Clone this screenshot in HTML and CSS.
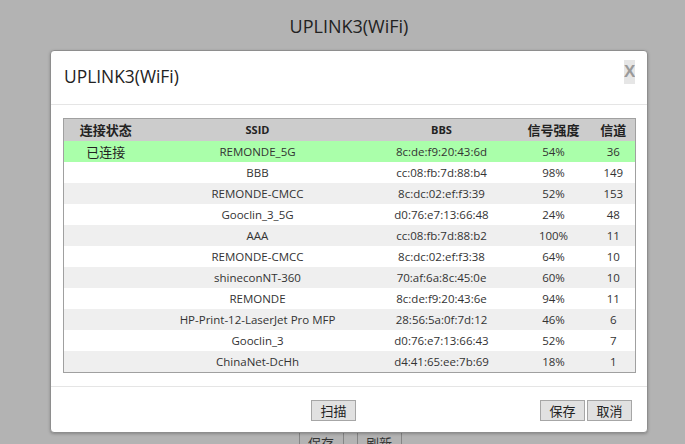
FILE: index.html
```html
<!DOCTYPE html>
<html lang="zh">
<head>
<meta charset="utf-8">
<title>UPLINK3(WiFi)</title>
<link rel="stylesheet" href="styles.css">
</head>
<body>
<div class="page">
  <h1 class="page-title">UPLINK3(WiFi)</h1>
  <div class="page-body"></div>
  <div class="page-actions">
    <button class="btn btn-dim">保存</button>
    <button class="btn btn-dim">刷新</button>
  </div>
</div>

<div class="modal">
  <div class="modal-header">
    <span class="modal-title">UPLINK3(WiFi)</span>
    <span class="modal-close">X</span>
  </div>
  <div class="modal-body">
    <table class="wifi-table">
      <colgroup>
        <col class="c1"><col class="c2"><col class="c3"><col class="c4"><col class="c5">
      </colgroup>
      <thead>
        <tr><th class="zh">连接状态</th><th>SSID</th><th>BBS</th><th class="zh">信号强度</th><th class="zh">信道</th></tr>
      </thead>
      <tbody>
        <tr class="connected"><td class="zh">已连接</td><td>REMONDE_5G</td><td>8c:de:f9:20:43:6d</td><td>54%</td><td>36</td></tr>
        <tr><td></td><td>BBB</td><td>cc:08:fb:7d:88:b4</td><td>98%</td><td>149</td></tr>
        <tr><td></td><td>REMONDE-CMCC</td><td>8c:dc:02:ef:f3:39</td><td>52%</td><td>153</td></tr>
        <tr><td></td><td>Gooclin_3_5G</td><td>d0:76:e7:13:66:48</td><td>24%</td><td>48</td></tr>
        <tr><td></td><td>AAA</td><td>cc:08:fb:7d:88:b2</td><td>100%</td><td>11</td></tr>
        <tr><td></td><td>REMONDE-CMCC</td><td>8c:dc:02:ef:f3:38</td><td>64%</td><td>10</td></tr>
        <tr><td></td><td>shineconNT-360</td><td>70:af:6a:8c:45:0e</td><td>60%</td><td>10</td></tr>
        <tr><td></td><td>REMONDE</td><td>8c:de:f9:20:43:6e</td><td>94%</td><td>11</td></tr>
        <tr><td></td><td>HP-Print-12-LaserJet Pro MFP</td><td>28:56:5a:0f:7d:12</td><td>46%</td><td>6</td></tr>
        <tr><td></td><td>Gooclin_3</td><td>d0:76:e7:13:66:43</td><td>52%</td><td>7</td></tr>
        <tr><td></td><td>ChinaNet-DcHh</td><td>d4:41:65:ee:7b:69</td><td>18%</td><td>1</td></tr>
      </tbody>
    </table>
  </div>
  <div class="modal-footer">
    <div class="footer-center">
      <button class="btn">扫描</button>
    </div>
    <div class="footer-right">
      <button class="btn">保存</button>
      <button class="btn">取消</button>
    </div>
  </div>
</div>
</body>
</html>
```

FILE: styles.css
```css
html, body {
  margin: 0;
  padding: 0;
}
body {
  background: #b3b3b3;
  font-family: "Open Sans", "Noto Sans CJK SC", sans-serif;
  color: #333;
  width: 685px;
  height: 444px;
  overflow: hidden;
  position: relative;
}
.page {
  width: 598px;
  margin-left: 50px;
}
.page-title {
  margin: 0;
  padding-top: 13px;
  font-size: 18px;
  font-weight: 400;
  line-height: 26px;
  text-align: center;
  color: #222;
}
.page-body {
  height: 393px;
}
.page-actions {
  display: flex;
  justify-content: center;
  gap: 13px;
  padding-left: 2px;
}
.btn {
  font-family: "Noto Sans CJK SC", "Open Sans", sans-serif;
  font-size: 13px;
  line-height: 18px;
  height: 21px;
  width: 45px;
  padding: 0;
  background: #e1e1e1;
  border: 1px solid #a6a6a6;
  border-radius: 0;
  color: #222;
}
.btn-dim {
  background: #b3b3b3;
  border-color: #858585;
  color: #333;
}

.modal {
  position: absolute;
  left: 50px;
  top: 50px;
  width: 596px;
  height: 381px;
  background: #fff;
  border: 1px solid #8e8e8e;
  border-radius: 4px;
  box-shadow: 0 1px 3px rgba(0,0,0,0.25);
  display: flex;
  flex-direction: column;
}
.modal-header {
  height: 53px;
  border-bottom: 1px solid #e5e5e5;
  display: flex;
  align-items: flex-start;
  justify-content: space-between;
  padding: 0 12px 0 13px;
}
.modal-title {
  font-size: 17.4px;
  line-height: 26px;
  margin-top: 12px;
  color: #222;
}
.modal-close {
  margin-top: 9px;
  width: 11px;
  height: 24px;
  background: #e6e6e6;
  color: #9a9a9a;
  font-family: "Liberation Sans", sans-serif;
  font-weight: 700;
  font-size: 17px;
  line-height: 24px;
  text-align: center;
  overflow: hidden;
}
.modal-body {
  padding: 13px 12px 13px 12px;
  border-bottom: 1px solid #e5e5e5;
}
.wifi-table {
  width: 572px;
  border-collapse: collapse;
  table-layout: fixed;
  border: 1px solid #a0a0a0;
  font-size: 11.5px;
}
.c1 { width: 84px; }
.c2 { width: 220px; }
.c3 { width: 148px; }
.c4 { width: 76px; }
.c5 { width: 44px; }
.wifi-table th {
  background: #cccccc;
  height: 22px;
  padding: 0;
  font-weight: 700;
  font-size: 11px;
  color: #222;
  text-align: center;
  line-height: 22px;
}
.wifi-table th.zh {
  font-size: 13px;
  font-family: "Noto Sans CJK SC", sans-serif;
}
.wifi-table td {
  height: 21px;
  padding: 0;
  text-align: center;
  line-height: 21px;
  white-space: nowrap;
}
.wifi-table td.zh {
  font-size: 13px;
  font-family: "Noto Sans CJK SC", sans-serif;
  color: #222;
}
.wifi-table tbody tr:nth-child(odd) td {
  background: #efefef;
}
.wifi-table tbody tr.connected td {
  background: #aaffaa;
}
.modal-footer {
  flex: 1;
  display: flex;
  align-items: flex-start;
  padding: 13px 15px 0 12px;
  position: relative;
}
.footer-center {
  flex: 1;
  display: flex;
  justify-content: center;
  padding-left: 64px;
}
.footer-right {
  display: flex;
  gap: 2px;
}
```
